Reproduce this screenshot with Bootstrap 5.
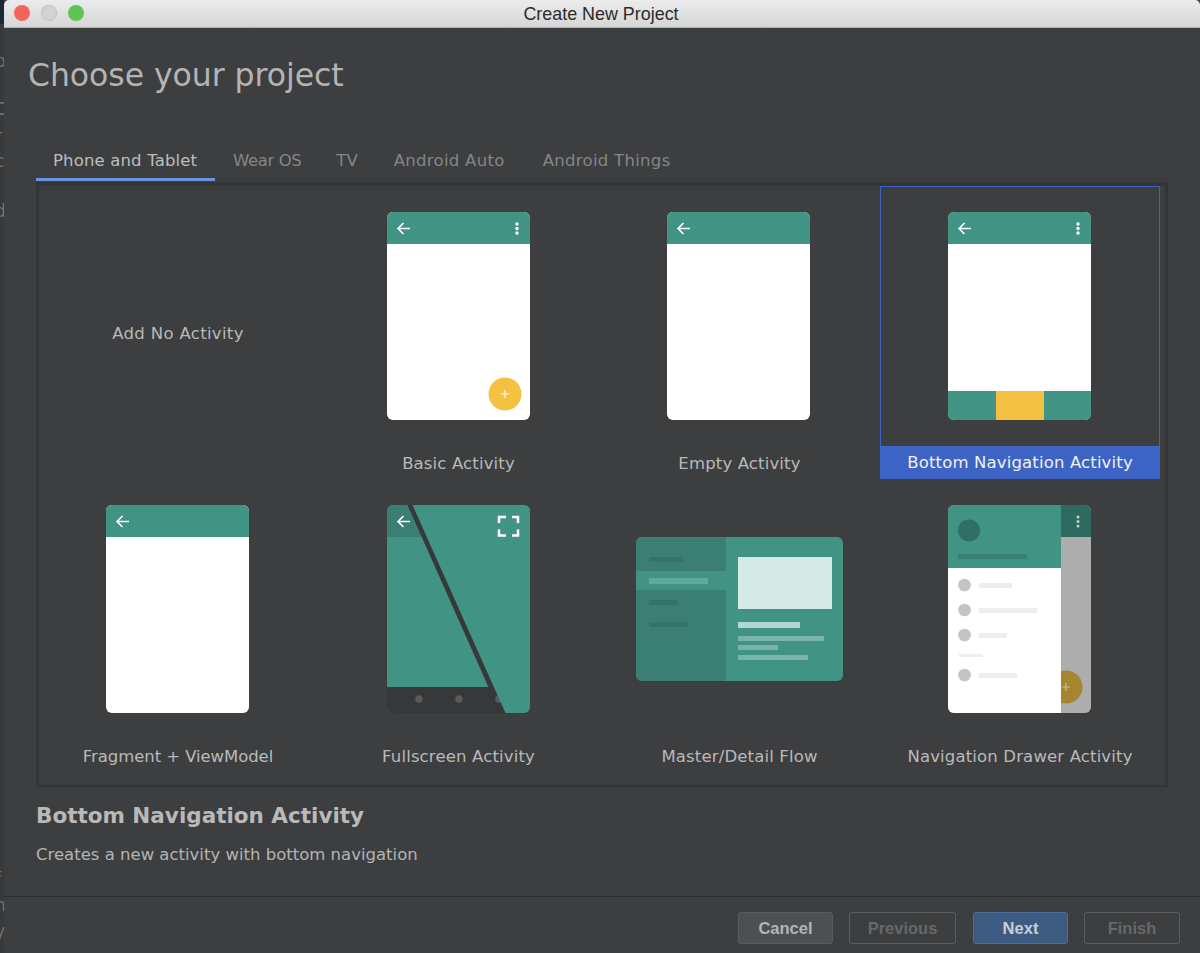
<!DOCTYPE html>
<html lang="en"><head><meta charset="utf-8"><title>Create New Project</title>
<link href="https://cdn.jsdelivr.net/npm/bootstrap@5.3.0/dist/css/bootstrap.min.css" rel="stylesheet">
<style>
html,body{height:953px;overflow:hidden;background:#2f3133;}
body{font-family:"DejaVu Sans",Verdana,sans-serif;color:#bbb;}
.backstrip{width:4px;flex:none;background:linear-gradient(#1c2a38 0,#1c2a38 24px,#37393b 24px);overflow:hidden;position:relative;font-size:17px;color:#737476;}
.backstrip span{position:absolute;left:-5px;line-height:1;}
.backstrip .b1{top:53px}.backstrip .b2{top:101px}.backstrip .b3{top:128px}.backstrip .b4{top:153px}.backstrip .b5{top:178px}.backstrip .b6{top:203px}.backstrip .b7{top:871px}.backstrip .b8{top:897px}.backstrip .b9{top:923px}
.appwin{width:1196px;height:953px;background:#3d3e40;flex:none;}
.titlebar{height:28px;background:linear-gradient(#ececec,#d6d6d6);border-bottom:1px solid #b0b0b0;position:relative;color:#2b2b2b;font-family:"Liberation Sans",sans-serif;font-size:17.9px;text-align:center;line-height:28px;padding-right:2px;border-top-left-radius:5px;border-top-right-radius:5px;}
.lights{position:absolute;left:10px;top:5px;gap:11px;}
.lights i{width:16px;height:16px;border-radius:50%;display:block;}
.lred{background:#f2655a}.lgrey{background:#d3d3d3;box-shadow:inset 0 0 0 1px #c4c4c4}.lgreen{background:#5ec454}
.headline{font-size:31.5px;line-height:40px;color:#b4b4b4;padding:27px 0 0 24px;height:94px;letter-spacing:-.05px;}
.tabstrip{padding-left:32px;height:60px;align-items:flex-start;padding-top:26px;}
.tabitem{color:#848689;font-size:16.5px;line-height:26px;height:33px;white-space:nowrap;}
.tabitem.on{color:#bdbdbd;border-bottom:3px solid #6b94e0;width:179px;padding-left:17px;letter-spacing:.15px;}
.tab-wear{margin-left:18px;letter-spacing:-.4px;}
.tab-tv{margin-left:35px;}
.tab-auto{margin-left:36px;letter-spacing:.3px;}
.tab-things{margin-left:38px;letter-spacing:.3px;}
.picker{margin-left:32px;width:1132px;height:605px;border:3px solid #333436;border-top-width:4px;border-bottom-width:2px;}
.tilegrid{display:grid;margin-left:-1px;grid-template-columns:280px 281px 281px 280px;grid-template-rows:repeat(2,293px);}
.tile{display:flex;flex-direction:column;align-items:center;position:relative;padding-top:25px;border:1px solid transparent;border-bottom:0;}
.tile svg{display:block;flex:none;}
.tile svg.nudge{margin-right:2px;}
.tilename{font-size:16.5px;line-height:33px;height:33px;margin-top:27px;color:#b9b9b9;white-space:nowrap;letter-spacing:.15px;}
.tilename.tight{letter-spacing:-.07px;}
.tile.sel{border-color:#3d64c4;}
.tile.sel .tilename{background:#3d64c4;color:#f1f1f1;align-self:stretch;text-align:center;margin-top:26px;margin-left:-1px;margin-right:-1px;}
.noact{justify-content:center;padding:0;}
.noact .tilename{margin:0;letter-spacing:.33px;}
.infohead{font-size:21.5px;font-weight:700;color:#b9b9b9;padding:14px 0 0 32px;line-height:30px;}
.infotext{font-size:16.5px;color:#b4b4b4;padding:12px 0 0 32px;line-height:24px;height:65px;}
.footbar{border-top:1px solid #2e2f31;height:58px;padding:15px 0 0 734px;gap:16px;font-family:"Liberation Sans",sans-serif;}
.dlgbtn{height:32px;line-height:31px;padding:0;font-size:16.5px;font-weight:700;border:1px solid #5a5c5e;border-radius:3px;text-align:center;background:transparent;color:#66686a;}
.dlgbtn.c1{width:95px;background:#4d5052;color:#b4b4b4;}
.dlgbtn.c2{width:107px;}
.dlgbtn.c3{width:95px;margin-left:1px;background:#3d5a80;border-color:#4a6d9c;color:#c8ced6;}
.dlgbtn.c4{width:96px;}
</style></head><body>
<div class="d-flex">
<div class="backstrip"><span class="b1">p</span><span class="b2">C</span><span class="b3">r</span><span class="b4">c</span><span class="b5">i</span><span class="b6">d</span><span class="b7">f</span><span class="b8">n</span><span class="b9">y</span></div>
<div class="appwin">
 <div class="titlebar"><div class="lights d-flex"><i class="lred"></i><i class="lgrey"></i><i class="lgreen"></i></div>Create New Project</div>
 <div class="headline">Choose your project</div>
 <div class="tabstrip d-flex">
  <div class="tabitem on">Phone and Tablet</div><div class="tabitem tab-wear">Wear OS</div><div class="tabitem tab-tv">TV</div><div class="tabitem tab-auto">Android Auto</div><div class="tabitem tab-things">Android Things</div>
 </div>
 <div class="picker"><div class="tilegrid">
  <div class="tile noact"><div class="tilename">Add No Activity</div></div>

  <div class="tile"><svg width="143" height="208" viewBox="0 0 143 208"><defs><clipPath id="c1"><rect width="143" height="208" rx="6"/></clipPath></defs><g clip-path="url(#c1)"><rect width="143" height="208" fill="#fff"/><rect width="143" height="32" fill="#419384"/></g><path d="M23 16.500H11M16.500 11L11 16.500L16.500 22" fill="none" stroke="#fff" stroke-width="1.600"/><circle cx="130" cy="12" r="1.700" fill="#fff"/><circle cx="130" cy="16.500" r="1.700" fill="#fff"/><circle cx="130" cy="21" r="1.700" fill="#fff"/><circle cx="118" cy="182" r="16.500" fill="#f5c143"/><path d="M118 178v8M114 182h8" stroke="#fff" stroke-width="1.200"/></svg><div class="tilename">Basic Activity</div></div>

  <div class="tile"><svg class="nudge" width="143" height="208" viewBox="0 0 143 208"><defs><clipPath id="c2"><rect width="143" height="208" rx="6"/></clipPath></defs><g clip-path="url(#c2)"><rect width="143" height="208" fill="#fff"/><rect width="143" height="32" fill="#419384"/></g><path d="M23 16.500H11M16.500 11L11 16.500L16.500 22" fill="none" stroke="#fff" stroke-width="1.600"/></svg><div class="tilename">Empty Activity</div></div>

  <div class="tile sel"><svg class="nudge" width="143" height="208" viewBox="0 0 143 208"><defs><clipPath id="c3"><rect width="143" height="208" rx="6"/></clipPath></defs><g clip-path="url(#c3)"><rect width="143" height="208" fill="#fff"/><rect width="143" height="32" fill="#419384"/><rect y="179" width="143" height="29" fill="#419384"/><rect x="48" y="179" width="48" height="29" fill="#f5c143"/></g><path d="M23 16.500H11M16.500 11L11 16.500L16.500 22" fill="none" stroke="#fff" stroke-width="1.600"/><circle cx="130" cy="12" r="1.700" fill="#fff"/><circle cx="130" cy="16.500" r="1.700" fill="#fff"/><circle cx="130" cy="21" r="1.700" fill="#fff"/></svg><div class="tilename">Bottom Navigation Activity</div></div>

  <div class="tile"><svg class="nudge" width="143" height="208" viewBox="0 0 143 208"><defs><clipPath id="c4"><rect width="143" height="208" rx="6"/></clipPath></defs><g clip-path="url(#c4)"><rect width="143" height="208" fill="#fff"/><rect width="143" height="32" fill="#419384"/></g><path d="M23 16.500H11M16.500 11L11 16.500L16.500 22" fill="none" stroke="#fff" stroke-width="1.600"/></svg><div class="tilename tight">Fragment + ViewModel</div></div>

  <div class="tile"><svg width="143" height="208" viewBox="0 0 143 208"><defs><clipPath id="c5"><rect width="143" height="208" rx="6"/></clipPath></defs><g clip-path="url(#c5)"><rect width="143" height="208" fill="#419384"/><rect width="34" height="32" fill="#3b7f72"/><rect y="182" width="143" height="26" fill="#373839"/><path d="M20.500 0H26L119 208H113Z" fill="#373839"/><circle cx="32" cy="194" r="3.800" fill="#5a5b5c"/><circle cx="72" cy="194" r="3.800" fill="#5a5b5c"/><circle cx="112" cy="194" r="3.800" fill="#5a5b5c"/><path d="M25.500 0H143V208H118.500Z" fill="#419384"/></g><path d="M23 16.500H11M16.500 11L11 16.500L16.500 22" fill="none" stroke="#fff" stroke-width="1.600"/><path d="M112 18V12H119M125 12H131V18M131 24.500V30.500H125M119 30.500H112V24.500" fill="none" stroke="#fff" stroke-width="2.500"/></svg><div class="tilename">Fullscreen Activity</div></div>

  <div class="tile"><svg width="208" height="208" viewBox="0 0 208 208"><defs><clipPath id="c6"><rect y="32" width="207" height="144" rx="6"/></clipPath></defs><g clip-path="url(#c6)"><rect y="32" width="207" height="144" fill="#419384"/><rect y="32" width="90" height="144" fill="#3b7f72"/><rect y="66" width="90" height="19" fill="#419384"/></g><rect x="13" y="52" width="34" height="5" fill="#357368"/><rect x="13" y="73" width="59" height="6" fill="#5fa99c"/><rect x="13" y="95" width="29" height="5" fill="#357368"/><rect x="13" y="117" width="39" height="5" fill="#357368"/><rect x="102" y="52" width="94" height="52" fill="#d5e9e6"/><rect x="102" y="117" width="62" height="6" fill="#b3d7d1"/><rect x="102" y="131" width="86" height="5" fill="#79b5aa"/><rect x="102" y="140" width="40" height="5" fill="#79b5aa"/><rect x="102" y="150" width="70" height="5" fill="#79b5aa"/></svg><div class="tilename">Master/Detail Flow</div></div>

  <div class="tile"><svg class="nudge" width="143" height="208" viewBox="0 0 143 208"><defs><clipPath id="c7"><rect width="143" height="208" rx="6"/></clipPath></defs><g clip-path="url(#c7)"><rect width="143" height="208" fill="#adadad"/><rect x="113" width="30" height="32" fill="#2d6a5f"/><circle cx="118" cy="182" r="16.500" fill="#a7852e"/><path d="M118 178v8M114 182h8" stroke="#c4c0a0" stroke-width="1.200"/><rect width="113" height="63" fill="#419384"/><rect y="63" width="113" height="145" fill="#fff"/></g><circle cx="21" cy="25.500" r="11" fill="#316f65"/><rect x="10" y="49" width="69" height="5" fill="#3b7f72"/><circle cx="130" cy="12" r="1.500" fill="#ccc"/><circle cx="130" cy="16.500" r="1.500" fill="#ccc"/><circle cx="130" cy="21" r="1.500" fill="#ccc"/><g fill="#c4c4c4"><circle cx="16.500" cy="80" r="6.300"/><circle cx="16.500" cy="105" r="6.300"/><circle cx="16.500" cy="130" r="6.300"/><circle cx="16.500" cy="170" r="6.300"/></g><g fill="#eee"><rect x="31" y="78" width="33" height="5"/><rect x="31" y="103" width="58" height="5"/><rect x="31" y="128" width="28" height="5"/><rect x="11" y="149" width="24" height="3"/><rect x="31" y="168" width="38" height="5"/></g></svg><div class="tilename">Navigation Drawer Activity</div></div>
 </div></div>
 <div class="infohead">Bottom Navigation Activity</div>
 <div class="infotext">Creates a new activity with bottom navigation</div>
 <div class="footbar d-flex">
  <div class="dlgbtn c1">Cancel</div><div class="dlgbtn c2">Previous</div><div class="dlgbtn c3">Next</div><div class="dlgbtn c4">Finish</div>
 </div>
</div></div>
<script src="https://cdn.jsdelivr.net/npm/bootstrap@5.3.0/dist/js/bootstrap.bundle.min.js"></script>
</body></html>
